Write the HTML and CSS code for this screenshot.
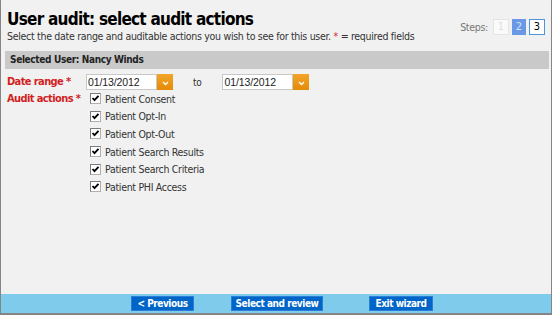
FILE: index.html
```html
<!DOCTYPE html>
<html lang="en">

<head>
    <meta charset="UTF-8">
    <title>User audit</title>
    <link rel="stylesheet" href="styles.css">
</head>

<body>
    <div class="wizard">
        <div class="content">
            <div class="header">
                <div class="heading">
                    <h1>User audit: select audit actions</h1>
                    <p class="intro">Select the date range and auditable actions you wish to see for this user. <span class="req">*</span> = required fields</p>
                </div>
                <div class="steps">
                    <span class="steps-label">Steps:</span>
                    <span class="step done">1</span>
                    <span class="step current">2</span>
                    <span class="step next">3</span>
                </div>
            </div>

            <div class="user-bar">Selected User: Nancy Winds</div>

            <!-- Date range -->
            <div class="form-row date-row">
                <label class="field-label">Date range <span>*</span></label>
                <div class="date-field">
                    <input type="text" value="01/13/2012">
                    <button class="date-btn"><svg width="7" height="5" viewBox="0 0 7 5"><path d="M1 1 L3.5 3.5 L6 1" fill="none" stroke="#fff" stroke-width="1.3"/></svg></button>
                </div>
                <span class="to">to</span>
                <div class="date-field">
                    <input type="text" value="01/13/2012">
                    <button class="date-btn"><svg width="7" height="5" viewBox="0 0 7 5"><path d="M1 1 L3.5 3.5 L6 1" fill="none" stroke="#fff" stroke-width="1.3"/></svg></button>
                </div>
            </div>

            <!-- Audit actions -->
            <div class="form-row">
                <label class="field-label">Audit actions <span>*</span></label>
                <ul class="actions">
                    <li><span class="check"><svg width="9" height="9" viewBox="0 0 9 9"><path d="M1.5 4 L3.5 6.2 L7.5 1.8" fill="none" stroke="#000" stroke-width="1.8"/></svg></span>Patient Consent</li>
                    <li><span class="check"><svg width="9" height="9" viewBox="0 0 9 9"><path d="M1.5 4 L3.5 6.2 L7.5 1.8" fill="none" stroke="#000" stroke-width="1.8"/></svg></span>Patient Opt-In</li>
                    <li><span class="check"><svg width="9" height="9" viewBox="0 0 9 9"><path d="M1.5 4 L3.5 6.2 L7.5 1.8" fill="none" stroke="#000" stroke-width="1.8"/></svg></span>Patient Opt-Out</li>
                    <li><span class="check"><svg width="9" height="9" viewBox="0 0 9 9"><path d="M1.5 4 L3.5 6.2 L7.5 1.8" fill="none" stroke="#000" stroke-width="1.8"/></svg></span>Patient Search Results</li>
                    <li><span class="check"><svg width="9" height="9" viewBox="0 0 9 9"><path d="M1.5 4 L3.5 6.2 L7.5 1.8" fill="none" stroke="#000" stroke-width="1.8"/></svg></span>Patient Search Criteria</li>
                    <li><span class="check"><svg width="9" height="9" viewBox="0 0 9 9"><path d="M1.5 4 L3.5 6.2 L7.5 1.8" fill="none" stroke="#000" stroke-width="1.8"/></svg></span>Patient PHI Access</li>
                </ul>
            </div>
        </div>

        <div class="footer">
            <button class="nav-btn prev">&lt; Previous</button>
            <button class="nav-btn review">Select and review</button>
            <button class="nav-btn exit">Exit wizard</button>
        </div>
    </div>
</body>

</html>
```

FILE: styles.css
```css
/* General Styles */
body {
    margin: 0;
    font-family: "DejaVu Sans Condensed", "DejaVu Sans", sans-serif;
    font-size: 10.5px;
    letter-spacing: -0.3px;
    color: #333;
}

.wizard {
    height: 315px;
    box-sizing: border-box;
    display: flex;
    flex-direction: column;
    background: #f1f1f1;
    border-left: 1px solid #858585;
    border-right: 1px solid #858585;
    border-bottom: 2px solid #858585;
}

.content {
    flex: 1;
    padding: 0 2px 0 4px;
}

/* Header */
.header {
    display: flex;
    justify-content: space-between;
    padding: 9px 4px 0 2px;
}

h1 {
    margin: 0;
    font-size: 17px;
    letter-spacing: -0.75px;
    font-weight: bold;
    color: #000;
    line-height: 20px;
}

.intro {
    margin: 0;
    line-height: 14px;
}

.req,
.field-label span {
    color: #d21f1f;
}

.steps {
    display: flex;
    align-items: center;
    gap: 3px;
    margin-top: 10px;
    height: 16px;
}

.steps-label {
    color: #777;
    margin-right: 2px;
}

.step {
    width: 16px;
    height: 16px;
    line-height: 14px;
    text-align: center;
    box-sizing: border-box;
    font-size: 11px;
    letter-spacing: 0;
    border: 1px solid transparent;
}

.step.done {
    border-color: #e4e4e4;
    background: #fafafa;
    color: #e0e0e0;
}

.step.current {
    background: #6a98e4;
    color: #d6e3fb;
    width: 14px;
}

.step.next {
    border-color: #4b95de;
    background: #fff;
    color: #000;
}

/* Selected user bar */
.user-bar {
    margin-top: 8px;
    background: #c9c9c9;
    font-weight: bold;
    font-size: 10px;
    letter-spacing: -0.35px;
    color: #222;
    padding: 0 5px;
    height: 18px;
    line-height: 18px;
}

/* Form rows */
.form-row {
    display: flex;
    align-items: flex-start;
    padding-left: 2px;
}

.date-row {
    margin-top: 5px;
    align-items: center;
}

.field-label {
    width: 79px;
    flex-shrink: 0;
    color: #d21f1f;
    font-weight: bold;
    font-size: 11px;
    letter-spacing: -0.6px;
    line-height: 17.6px;
}

.date-row .field-label {
    line-height: 16px;
}

.date-field {
    display: flex;
}

.date-field input {
    width: 71px;
    height: 16px;
    box-sizing: border-box;
    border: 1px solid #c8c8c8;
    padding: 0 1px;
    font-family: "Liberation Sans", Arial, sans-serif;
    font-size: 10.5px;
    letter-spacing: -0.1px;
    color: #222;
    background: #fff;
}

.date-btn {
    width: 16px;
    height: 16px;
    padding: 0;
    border: none;
    background: linear-gradient(#f2a52a, #e48a06);
    display: flex;
    align-items: center;
    justify-content: center;
    padding-top: 3px;
}

.to {
    margin: 0 21px 0 20px;
    font-size: 10px;
}

/* Audit actions */
.actions {
    list-style: none;
    margin: 0 0 0 4px;
    padding: 0;
}

.actions li {
    display: flex;
    align-items: center;
    height: 17.6px;
    color: #333;
}

.check {
    width: 11px;
    height: 11px;
    box-sizing: border-box;
    border: 1px solid #7c7c7c;
    border-right-color: #b0b0b0;
    border-bottom-color: #b0b0b0;
    background: #fff;
    margin-right: 4px;
    display: flex;
    align-items: center;
    justify-content: center;
}

/* Footer */
.footer {
    display: flex;
    background: #7ecbeb;
    height: 19px;
    align-items: center;
}

.nav-btn {
    background: #0065c9;
    color: #fff;
    border: 1px solid #2a7ed6;
    font-family: "DejaVu Sans Condensed", "DejaVu Sans", sans-serif;
    font-weight: bold;
    font-size: 10px;
    letter-spacing: -0.45px;
    height: 15px;
    padding: 0;
    line-height: 13px;
    white-space: nowrap;
    text-align: center;
}

.prev {
    margin-left: 130px;
    width: 63px;
}

.review {
    margin-left: 37px;
    width: 92px;
}

.exit {
    margin-left: 46px;
    width: 64px;
}
```
